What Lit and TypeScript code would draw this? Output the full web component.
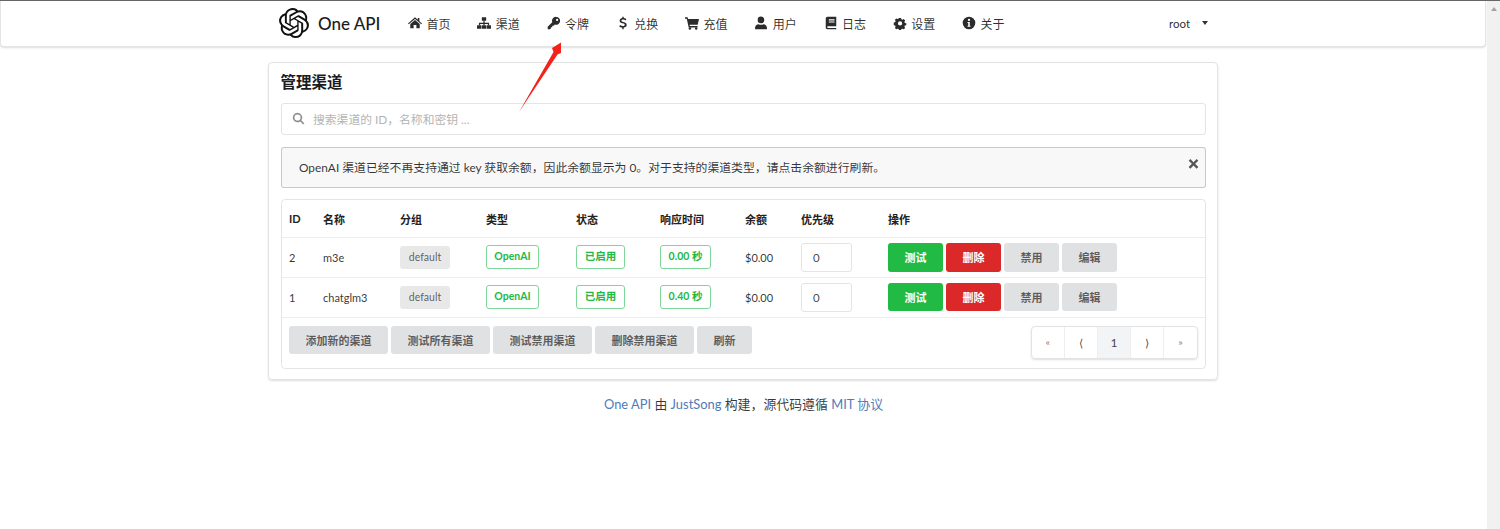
import { LitElement, html, css, svg } from "lit";
import { customElement } from "lit/decorators.js";

const logo = "M22.2819 9.8211a5.9847 5.9847 0 0 0-.5157-4.9108 6.0462 6.0462 0 0 0-6.5098-2.9A6.0651 6.0651 0 0 0 4.9807 4.1818a5.9847 5.9847 0 0 0-3.9977 2.9 6.0462 6.0462 0 0 0 .7427 7.0966 5.98 5.98 0 0 0 .511 4.9107 6.051 6.051 0 0 0 6.5146 2.9001A5.9847 5.9847 0 0 0 13.2599 24a6.0557 6.0557 0 0 0 5.7718-4.2058 5.9894 5.9894 0 0 0 3.9977-2.9001 6.0557 6.0557 0 0 0-.7475-7.0729zm-9.022 12.6081a4.4755 4.4755 0 0 1-2.8764-1.0408l.1419-.0804 4.7783-2.7582a.7948.7948 0 0 0 .3927-.6813v-6.7369l2.02 1.1686a.071.071 0 0 1 .038.052v5.5826a4.504 4.504 0 0 1-4.4945 4.4944zm-9.6607-4.1254a4.4708 4.4708 0 0 1-.5346-3.0137l.142.0852 4.783 2.7582a.7712.7712 0 0 0 .7806 0l5.8428-3.3685v2.3324a.0804.0804 0 0 1-.0332.0615L9.74 19.9502a4.4992 4.4992 0 0 1-6.1408-1.6464zM2.3408 7.8956a4.485 4.485 0 0 1 2.3655-1.9728V11.6a.7664.7664 0 0 0 .3879.6765l5.8144 3.3543-2.0201 1.1685a.0757.0757 0 0 1-.071 0l-4.8303-2.7865A4.504 4.504 0 0 1 2.3408 7.872zm16.5963 3.8558L13.1038 8.364 15.1192 7.2a.0757.0757 0 0 1 .071 0l4.8303 2.7913a4.4944 4.4944 0 0 1-.6765 8.1042v-5.6772a.79.79 0 0 0-.407-.667zm2.0107-3.0231l-.142-.0852-4.7735-2.7818a.7759.7759 0 0 0-.7854 0L9.409 9.2297V6.8974a.0662.0662 0 0 1 .0284-.0615l4.8303-2.7866a4.4992 4.4992 0 0 1 6.6802 4.66zM8.3065 12.863l-2.02-1.1638a.0804.0804 0 0 1-.038-.0567V6.0742a4.4992 4.4992 0 0 1 7.3757-3.4537l-.142.0805L8.704 5.459a.7948.7948 0 0 0-.3927.6813zm1.0976-2.3654l2.602-1.4998 2.6069 1.4998v2.9994l-2.5974 1.4997-2.6067-1.4997Z";

const icons: Record<string, unknown> = {
  home: svg`<path d="M8 1.5 L11.2 4.3 V2.4 H13 V5.9 L16 8.6 L15.2 9.5 L8 3.3 L0.8 9.5 L0 8.6 Z"/><path d="M8 4.6 L13.4 9.2 V14 H9.6 V10.4 H6.4 V14 H2.6 V9.2 Z"/>`,
  sitemap: svg`<rect x="5.5" y="1.5" width="5" height="4" rx=".6"/><rect x="0" y="10.5" width="5" height="4" rx=".6"/><rect x="5.5" y="10.5" width="5" height="4" rx=".6"/><rect x="11" y="10.5" width="5" height="4" rx=".6"/><path d="M7.3 5.5h1.4v2.3h5.1v2.7h-1.4V9.2H8.7v1.3H7.3V9.2H3.6v1.3H2.2V7.8h5.1z"/>`,
  key: svg`<path fill-rule="evenodd" d="M10.5 1a4.5 4.5 0 1 1-1.5 8.75L7.6 11.2H6v1.6H4.4v1.6L3.4 15.2H.8V12.4L6 7.2A4.5 4.5 0 0 1 10.5 1zm1.1 2.2a1.3 1.3 0 1 0 0 2.6 1.3 1.3 0 0 0 0-2.6z"/>`,
  dollar: svg`<path d="M7.2 0.8h1.6v1.6c1.3.1 2.4.6 3 1.2L10.9 5c-.7-.5-1.6-.9-2.7-.9-1.3 0-2 .5-2 1.2 0 .8.8 1.1 2.4 1.6 2.1.6 3.6 1.3 3.6 3.3 0 1.6-1.2 2.7-3.4 3v1.9H7.2v-1.8c-1.5-.1-2.7-.7-3.5-1.4l1-1.5c.8.7 1.9 1.1 3.1 1.1 1.4 0 2.2-.5 2.2-1.4 0-.9-.8-1.2-2.5-1.7C5.6 7.8 4.1 7.1 4.1 5.3c0-1.5 1.2-2.6 3.1-2.9z"/>`,
  cart: svg`<path d="M0 1.5h3l.5 2H16l-1.5 6.5H5.2l.3 1.500h8.800v1.500H4.200L2 3H0z"/><circle cx="5.6" cy="14.2" r="1.4"/><circle cx="12.8" cy="14.2" r="1.4"/>`,
  user: svg`<circle cx="8" cy="4.5" r="3.8"/><path d="M1.2 15.2v-1.7c0-2.5 2-4.2 4-4.2.9.5 1.8.8 2.8.8s1.9-.3 2.8-.8c2 0 4 1.7 4 4.2v1.7z"/>`,
  book: svg`<path fill-rule="evenodd" d="M4 .8h10v11H4.3c-.8 0-.8 1.800 0 1.800H14v1.600H4c-1.300 0-2-.9-2-2V2.800C2 1.600 2.800.8 4 .8zm1.500 3v1.300h6.500V3.800zm0 2.400v1.300h6.500V6.200z"/>`,
  cog: svg`<path fill-rule="evenodd" d="M6.6.8h2.8l.4 2 1.5.7 1.8-1 2 2-1 1.8.6 1.5 2 .5v2.8l-2 .4-.6 1.5 1 1.8-2 2-1.8-1-1.5.6-.4 2H6.6l-.5-2-1.5-.6-1.8 1-2-2 1-1.8-.6-1.5-2-.4V7.3l2-.5.6-1.5-1-1.8 2-2 1.8 1 1.5-.7zM8 5.5a3 3 0 1 0 0 6 3 3 0 0 0 0-6z" transform="translate(1.5 1.5) scale(.82)"/>`,
  info: svg`<path fill-rule="evenodd" d="M8 .8a7.2 7.2 0 1 1 0 14.4A7.2 7.2 0 0 1 8 .8zM8 3.2a1.3 1.3 0 1 0 0 2.6 1.3 1.3 0 0 0 0-2.6zM6.3 6.8v1.3h.8v3H6.3v1.3h3.4v-1.3h-.8V6.8z"/>`,
  search: svg`<path fill-rule="evenodd" d="M6.8 1a5.8 5.8 0 0 1 4.7 9.2l3.8 3.8-1.4 1.400-3.800-3.800A5.800 5.800 0 1 1 6.800 1zm0 2a3.800 3.800 0 1 0 0 7.600 3.800 3.800 0 0 0 0-7.600z"/>`,
  close: svg`<path d="M3.4 1.5 8 6.1l4.6-4.6 2.4 2.4L10.4 8.500l4.600 4.600-2.400 2.400L8 10.900l-4.600 4.600L1 13.100l4.600-4.600L1 3.900z"/>`,
};

const ic = (n: string) => html`<svg class="ic" viewBox="0 0 16 16" fill="currentColor">${icons[n]}</svg>`;

const nav = [
  ["home", "首页"], ["sitemap", "渠道"], ["key", "令牌"], ["dollar", "兑换"], ["cart", "充值"],
  ["user", "用户"], ["book", "日志"], ["cog", "设置"], ["info", "关于"],
];
const heads = ["ID", "名称", "分组", "类型", "状态", "响应时间", "余额", "优先级", "操作"];
const rows = [
  { id: 2, name: "m3e", t: "0.00 秒" },
  { id: 1, name: "chatglm3", t: "0.40 秒" },
];

@customElement("app-root")
export class AppRoot extends LitElement {
  static styles = css`
    :host { display: block; height: 529px; overflow: hidden; background: #fff; color: rgba(0,0,0,.87);
      font-family: Lato, "Noto Sans CJK SC", sans-serif; font-size: 11.5px; position: relative; }
    .page { display: flex; height: 529px; border-top: 1px solid #666; box-sizing: border-box; }
    .main { flex: 1; min-width: 0; }
    .scroll { width: 13px; background: #f1f1f1; display: flex; justify-content: center; padding-top: 6px; box-sizing: border-box; }
    .up { width: 0; height: 0; border: 3.5px solid transparent; border-top: 0; border-bottom: 4px solid #a3a3a3; }

    .nav { height: 45.5px; margin-right: 1px; box-sizing: border-box; background: #fff; border: 1px solid #e3e4e6; border-top: 0;
      border-radius: 0 0 4px 4px; box-shadow: 0 1px 2px rgba(34,36,38,.15); display: flex; align-items: center; padding-left: 278px; }
    .logo { width: 30px; height: 30px; display: block; color: #111; }
    .brand { font-size: 17px; font-weight: 500; margin-left: 9px; width: 90px; flex: none; color: #1b1c1d; font-family: Lato, sans-serif; }
    .items { display: flex; }
    .item { display: flex; align-items: center; font-size: 12px; color: rgba(0,0,0,.82); width: 69.25px; }
    .item .ic { width: 14px; height: 14px; margin-right: 4.5px; color: #2b2b2b; flex: none; }
    .user { margin-left: 137.85px; font-size: 11.5px; color: rgba(0,0,0,.85); display: flex; align-items: center; gap: 12px; }
    .caret { width: 0; height: 0; border: 3.5px solid transparent; border-bottom: 0; border-top: 4px solid #333; }

    .card { width: 950px; height: 318px; margin: 15.5px 0 0 268px; box-sizing: border-box; border: 1px solid #e2e3e4; border-radius: 4px;
      box-shadow: 0 1px 2px rgba(34,36,38,.15); padding: 0 11px 0 12px; }
    h1 { margin: 0 0 0 -.5px; font-size: 15.5px; line-height: 38px; height: 40px; font-weight: 700; color: #1b1c1d; }
    .search { height: 32px; box-sizing: border-box; border: 1px solid #e3e4e5; border-radius: 3px; display: flex; align-items: center; padding-left: 10px; padding-bottom: 1px; color: #b4b4b4; font-size: 11.8px; gap: 8px; }
    .search .ic { width: 13px; height: 13px; color: #8e8e8e; }
    .alert { height: 41px; margin-top: 12px; box-sizing: border-box; background: #f8f8f9; border-radius: 3px; box-shadow: inset 0 0 0 1px rgba(34,36,38,.22);
      display: flex; align-items: center; justify-content: space-between; padding: 0 7px 2px 18px; font-size: 11.85px; color: rgba(0,0,0,.8); }
    .alert .ic { width: 11px; height: 11px; color: #555; margin-bottom: 6px; }

    .tbl { margin-top: 11px; height: 170px; box-sizing: border-box; border: 1px solid #e4e5e6; border-radius: 4px; display: flex; flex-direction: column; }
    .r { display: grid; grid-template-columns: 34px 77px 86px 90px 84px 85px 56px 87px 1fr; align-items: center; border-bottom: 1px solid #eceded; box-sizing: border-box; padding: 0; }
    .r > div { padding-left: 7px; }
    .hd { height: 38px; font-weight: 700; color: #222; font-size: 11px; }
    .row { height: 39.5px; color: rgba(0,0,0,.8); font-size: 11px; }
    .row.b { height: 40px; }
    .grp { display: inline-block; background: #e8e8e8; color: rgba(0,0,0,.62); border-radius: 3px; width: 50px; height: 23px; line-height: 23px; text-align: center; font-size: 10.5px; font-weight: 400; }
    .tag { display: inline-block; box-sizing: border-box; height: 24px; line-height: 21px; border: 1px solid #7fd69a; border-radius: 3px; color: #21ba45; text-align: center; font-weight: 700; font-size: 10.5px; }
    .w1 { width: 53px; } .w2 { width: 49px; } .w3 { width: 51px; }
    .num { width: 51px; height: 29px; box-sizing: border-box; border: 1px solid #e3e4e5; border-radius: 3px; padding-left: 11px; display: flex; align-items: center; font-size: 11.5px; color: rgba(0,0,0,.75); }
    .ops { display: flex; gap: 3px; }
    .btn { height: 28.5px; border-radius: 3px; display: flex; align-items: center; justify-content: center; font-weight: 700; font-size: 11px; background: #e0e1e2; color: rgba(0,0,0,.6); }
    .ops .btn { width: 55px; }
    .g { background: #21ba45; color: #fff; } .red { background: #db2828; color: #fff; }
    .foot { flex: 1; display: flex; justify-content: space-between; padding: 8px 7px 0 7px; }
    .bs { display: flex; gap: 3px; align-self: flex-start; }
    .bs .btn { width: 99px; }
    .bs .btn.s { width: 55px; }
    .pg { display: flex; height: 33px; box-sizing: border-box; border: 1px solid #e2e3e4; border-radius: 4px; box-shadow: 0 1px 2px rgba(34,36,38,.15); }
    .pg div { width: 33px; box-sizing: border-box; display: flex; align-items: center; justify-content: center; border-right: 1px solid #eeeeee; color: rgba(0,0,0,.75); font-size: 10.5px; font-family: "Noto Sans CJK SC", sans-serif; }
    .pg div:last-child { border-right: 0; }
    .pg .on { background: #f3f4f5; font-size: 12px; font-family: Lato, sans-serif; font-weight: 400; }
    .pg .sm { font-size: 9px; color: rgba(0,0,0,.6); }

    .ft { margin: 15px 0 0 268.5px; width: 950px; text-align: center; line-height: 18px; font-size: 12.9px; color: rgba(0,0,0,.78); }
    .ft span { color: #4f7cb8; }
    .arrow { position: absolute; left: 500px; top: 30px; width: 80px; height: 90px; pointer-events: none; }
  `;

  render() {
    return html`<div class="page">
      <div class="main">
        <div class="nav">
          <svg class="logo" viewBox="0 0 24 24" fill="currentColor"><path d=${logo}/></svg>
          <div class="brand">One API</div>
          <div class="items">${nav.map(([i, l]) => html`<div class="item">${ic(i)}<span>${l}</span></div>`)}</div>
          <div class="user">root<span class="caret"></span></div>
        </div>
        <div class="card">
          <h1>管理渠道</h1>
          <div class="search">${ic("search")}<span>搜索渠道的 ID，名称和密钥 ...</span></div>
          <div class="alert"><span>OpenAI 渠道已经不再支持通过 key 获取余额，因此余额显示为 0。对于支持的渠道类型，请点击余额进行刷新。</span>${ic("close")}</div>
          <div class="tbl">
            <div class="r hd">${heads.map((h) => html`<div>${h}</div>`)}</div>
            ${rows.map((r, i) => html`<div class="r row ${i ? "b" : ""}">
              <div>${r.id}</div><div>${r.name}</div>
              <div><span class="grp">default</span></div>
              <div><span class="tag w1">OpenAI</span></div>
              <div><span class="tag w2">已启用</span></div>
              <div><span class="tag w3">${r.t}</span></div>
              <div>$0.00</div>
              <div><div class="num">0</div></div>
              <div class="ops"><div class="btn g">测试</div><div class="btn red">删除</div><div class="btn">禁用</div><div class="btn">编辑</div></div>
            </div>`)}
            <div class="foot">
              <div class="bs"><div class="btn">添加新的渠道</div><div class="btn">测试所有渠道</div><div class="btn">测试禁用渠道</div><div class="btn">删除禁用渠道</div><div class="btn s">刷新</div></div>
              <div class="pg"><div class="sm">«</div><div>⟨</div><div class="on">1</div><div>⟩</div><div class="sm">»</div></div>
            </div>
          </div>
        </div>
        <div class="ft"><span>One API</span> 由 <span>JustSong</span> 构建，源代码遵循 <span>MIT 协议</span></div>
      </div>
      <div class="scroll"><div class="up"></div></div>
    </div>
    <svg class="arrow" viewBox="500 30 80 90"><polygon points="519,112 553.5,52 552,48 561,42.5 561,53 557.5,54.5" fill="#f3231c"/></svg>`;
  }
}
